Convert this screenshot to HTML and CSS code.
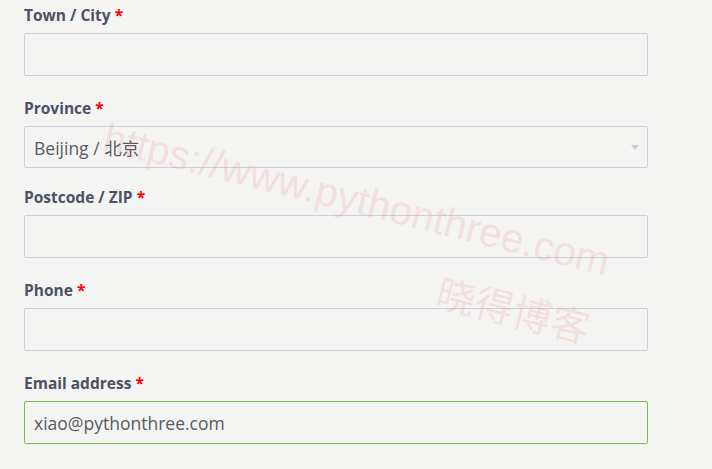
FILE: index.html
```html
<!DOCTYPE html>
<html lang="en">
<head>
<meta charset="utf-8">
<title>Billing details</title>
<link rel="stylesheet" href="styles.css">
</head>
<body>
<form class="form">
  <div class="field">
    <label class="label">Town / City <abbr class="req">*</abbr></label>
    <div class="input"></div>
  </div>
  <div class="field field-select">
    <label class="label">Province <abbr class="req">*</abbr></label>
    <div class="input select"><span class="value">Beijing / 北京</span><span class="arrow"></span></div>
  </div>
  <div class="field">
    <label class="label">Postcode / ZIP <abbr class="req">*</abbr></label>
    <div class="input"></div>
  </div>
  <div class="field">
    <label class="label">Phone <abbr class="req">*</abbr></label>
    <div class="input"></div>
  </div>
  <div class="field">
    <label class="label">Email address <abbr class="req">*</abbr></label>
    <div class="input valid"><span class="value">xiao@pythonthree.com</span></div>
  </div>
</form>
<div class="wm wm-url">https://www.pythonthree.com</div>
<div class="wm wm-cn">晓得博客</div>
</body>
</html>
```
FILE: styles.css
```css
html, body {
  margin: 0;
  padding: 0;
  background: #f4f4f2;
}
body {
  width: 712px;
  height: 469px;
  overflow: hidden;
  position: relative;
  font-family: "Open Sans", "Noto Sans CJK SC", sans-serif;
}
.form {
  padding: 3px 0 0 24px;
  width: 624px;
}
.field {
  display: flex;
  flex-direction: column;
  margin-bottom: 20px;
}
.label {
  font-size: 15.5px;
  font-weight: 700;
  line-height: 24px;
  color: #4a5263;
  margin-bottom: 6px;
}
.req {
  color: #ff0000;
  text-decoration: none;
  font-weight: 700;
}
.input {
  box-sizing: border-box;
  height: 43px;
  border: 1px solid #cbd1db;
  border-radius: 2px;
  background: #f4f4f2;
  display: flex;
  align-items: center;
  padding: 0 9px;
  font-size: 17.5px;
  color: #575b63;
}
.select {
  height: 42px;
  justify-content: space-between;
}
.field-select {
  margin-bottom: 17px;
}
.valid {
  border-color: #7cbc56;
}
.arrow {
  width: 0;
  height: 0;
  border-left: 4px solid transparent;
  border-right: 4px solid transparent;
  border-top: 5px solid #c3c9d6;
  margin-right: -1px;
}
.wm {
  position: absolute;
  color: rgba(236, 120, 132, 0.18);
  white-space: nowrap;
  transform-origin: 0 0;
  pointer-events: none;
}
.wm-url {
  left: 110px;
  top: 114px;
  font-family: "Liberation Sans", sans-serif;
  font-size: 40.5px;
  transform: rotate(14deg);
}
.wm-cn {
  left: 445px;
  top: 262px;
  font-family: "Noto Sans CJK SC", sans-serif;
  font-size: 39px;
  transform: rotate(14deg);
}
```
